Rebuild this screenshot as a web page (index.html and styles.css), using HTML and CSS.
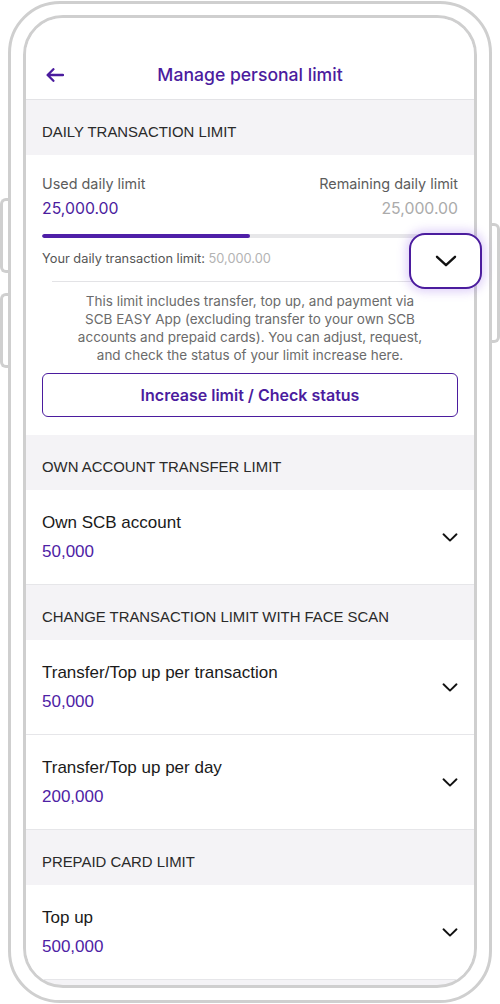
FILE: index.html
```html
<!DOCTYPE html>
<html lang="en">
<head>
<meta charset="utf-8">
<title>Manage personal limit</title>
<link rel="stylesheet" href="styles.css">
</head>
<body>
<div class="device">
  <span class="side-btn side-left b1"></span>
  <span class="side-btn side-left b2"></span>
  <span class="side-btn side-right b3"></span>
  <div class="screen">
    <header class="nav">
      <svg class="back" width="18" height="14" viewBox="0 0 18 14" aria-hidden="true"><path d="M17 7H1.8M7.4 1.2L1.6 7l5.8 5.8" fill="none" stroke="#4b1c9e" stroke-width="2.3" stroke-linecap="round" stroke-linejoin="round"/></svg>
      <h1 class="nav-title">Manage personal limit</h1>
      <span></span>
    </header>

    <div class="section-head">DAILY TRANSACTION LIMIT</div>
    <section class="daily">
      <div class="stats">
        <div class="stat">
          <span class="stat-label">Used daily limit</span>
          <span class="stat-value used">25,000.00</span>
        </div>
        <div class="stat stat-right">
          <span class="stat-label">Remaining daily limit</span>
          <span class="stat-value remain">25,000.00</span>
        </div>
      </div>
      <div class="bar"><div class="fill" style="width:50%"></div></div>
      <p class="limit-line">Your daily transaction limit: <span>50,000.00</span></p>
      <hr class="divider">
      <p class="desc">This limit includes transfer, top up, and payment via<br>SCB EASY App (excluding transfer to your own SCB<br>accounts and prepaid cards). You can adjust, request,<br>and check the status of your limit increase here.</p>
      <button class="outline-btn" type="button">Increase limit / Check status</button>
    </section>

    <div class="section-head">OWN ACCOUNT TRANSFER LIMIT</div>
    <div class="row">
      <div class="row-text"><span class="row-title">Own SCB account</span><span class="row-value">50,000</span></div>
      <svg class="chev" width="16" height="9" viewBox="0 0 16 9" aria-hidden="true"><path d="M1.5 1.3L8 7.6l6.5-6.3" fill="none" stroke="#111" stroke-width="1.9" stroke-linecap="round" stroke-linejoin="round"/></svg>
    </div>

    <div class="section-head">CHANGE TRANSACTION LIMIT WITH FACE SCAN</div>
    <div class="row">
      <div class="row-text"><span class="row-title">Transfer/Top up per transaction</span><span class="row-value">50,000</span></div>
      <svg class="chev" width="16" height="9" viewBox="0 0 16 9" aria-hidden="true"><path d="M1.5 1.3L8 7.6l6.5-6.3" fill="none" stroke="#111" stroke-width="1.9" stroke-linecap="round" stroke-linejoin="round"/></svg>
    </div>
    <div class="row">
      <div class="row-text"><span class="row-title">Transfer/Top up per day</span><span class="row-value">200,000</span></div>
      <svg class="chev" width="16" height="9" viewBox="0 0 16 9" aria-hidden="true"><path d="M1.5 1.3L8 7.6l6.5-6.3" fill="none" stroke="#111" stroke-width="1.9" stroke-linecap="round" stroke-linejoin="round"/></svg>
    </div>

    <div class="section-head">PREPAID CARD LIMIT</div>
    <div class="row">
      <div class="row-text"><span class="row-title">Top up</span><span class="row-value">500,000</span></div>
      <svg class="chev" width="16" height="9" viewBox="0 0 16 9" aria-hidden="true"><path d="M1.5 1.3L8 7.6l6.5-6.3" fill="none" stroke="#111" stroke-width="1.9" stroke-linecap="round" stroke-linejoin="round"/></svg>
    </div>
  </div>

  <button class="toggle" type="button" aria-label="Collapse">
    <svg width="22" height="12" viewBox="0 0 22 12" aria-hidden="true"><path d="M2 1.8l9 8.4 9-8.4" fill="none" stroke="#111" stroke-width="2.4" stroke-linecap="round" stroke-linejoin="round"/></svg>
  </button>
</div>
</body>
</html>
```

FILE: styles.css
```css
* { box-sizing: border-box; }

html, body {
  margin: 0;
  padding: 0;
  background: #ffffff;
}

body {
  width: 500px;
  height: 1004px;
  overflow: hidden;
  font-family: "Liberation Sans", Arial, sans-serif;
  padding-top: 1px;
}

.device {
  position: relative;
  margin-left: 8px;
  width: 484px;
  height: 1002px;
  border: 3px solid #cfcfcf;
  border-radius: 52px;
  padding: 11px 12px 12px 12px;
  background: #ffffff;
}

.side-btn {
  position: absolute;
  width: 11px;
  border: 3px solid #cfcfcf;
  background: transparent;
}

.side-left {
  left: -11px;
  border-right: none;
  border-radius: 6px 0 0 6px;
}

.side-right {
  right: -11px;
  border-left: none;
  border-radius: 0 6px 6px 0;
}

.b1 { top: 194px; height: 75px; }
.b2 { top: 289px; height: 75px; }
.b3 { top: 219px; height: 120px; }

.screen {
  height: 100%;
  border: 3px solid #cfcfcf;
  border-radius: 40px;
  overflow: hidden;
  background: #f4f3f6;
}

/* nav */
.nav {
  display: grid;
  grid-template-columns: 1fr auto 1fr;
  align-items: center;
  height: 82px;
  padding: 33px 20px 0 20px;
  background: #ffffff;
  border-bottom: 1px solid #e3e3e6;
}

.back { display: block; }

.nav-title {
  margin: 0;
  height: 48px;
  line-height: 48px;
  font-family: Inter, "Liberation Sans", sans-serif;
  font-weight: 500;
  font-size: 17.6px;
  color: #4b1c9e;
}

/* section header */
.section-head {
  padding: 22px 16px 13px;
  line-height: 20px;
  font-size: 14.9px;
  color: #2a2a2a;
  background: #f4f3f6;
}

/* daily card */
.daily {
  background: #ffffff;
  padding: 19px 16px 18px;
}

.stats {
  display: flex;
  justify-content: space-between;
}

.stat {
  display: flex;
  flex-direction: column;
  gap: 4px;
}

.stat-right { align-items: flex-end; }

.stat-label {
  font-family: Inter, "Liberation Sans", sans-serif;
  font-size: 14.4px;
  line-height: 20px;
  color: #5c5c5c;
}

.stat-value {
  font-family: Inter, "Liberation Sans", sans-serif;
  font-size: 15.8px;
  line-height: 22px;
}

.used { color: #4b1c9e; }
.remain { color: #ababab; }

.bar {
  margin-top: 14px;
  height: 4px;
  border-radius: 2px;
  background: #e7e7e9;
  overflow: hidden;
}

.fill {
  height: 100%;
  background: #4f1fa8;
  border-radius: 2px;
}

.limit-line {
  margin: 12px 0 0;
  font-family: Inter, "Liberation Sans", sans-serif;
  font-size: 12.8px;
  line-height: 18px;
  color: #555555;
}

.limit-line span { color: #b3b3b3; }

.divider {
  margin: 13px 10px 0;
  border: none;
  border-top: 1px solid #e3e3e6;
  height: 0;
}

.desc {
  margin: 10px 0 0;
  text-align: center;
  font-family: Inter, "Liberation Sans", sans-serif;
  font-size: 13.5px;
  line-height: 18px;
  color: #6b6b6b;
}

.outline-btn {
  display: block;
  width: 100%;
  height: 44px;
  margin-top: 9px;
  border: 1.5px solid #4b1c9e;
  border-radius: 6px;
  background: #ffffff;
  font-family: Inter, "Liberation Sans", sans-serif;
  font-weight: 600;
  font-size: 16px;
  color: #4b1c9e;
}

/* rows */
.row {
  display: flex;
  align-items: center;
  justify-content: space-between;
  padding: 23px 16px 22px;
  background: #ffffff;
  border-bottom: 1px solid #e6e6e9;
}

.row-text {
  display: flex;
  flex-direction: column;
  gap: 9px;
}

.row-title {
  font-size: 17px;
  line-height: 20px;
  color: #1a1a1a;
}

.row-value {
  font-size: 17px;
  line-height: 20px;
  color: #4e22a5;
}

.chev { display: block; flex: none; }

/* overlay toggle */
.toggle {
  position: absolute;
  left: 398px;
  top: 229px;
  width: 73px;
  height: 56px;
  padding: 0;
  border: 2px solid #4b1c9e;
  border-radius: 16px;
  background: #ffffff;
  box-shadow: 0 0 10px 3px rgba(140, 90, 230, 0.28);
  display: flex;
  align-items: center;
  justify-content: center;
}

.toggle svg { display: block; }
```
